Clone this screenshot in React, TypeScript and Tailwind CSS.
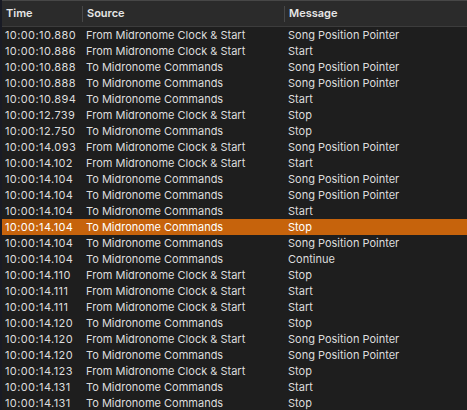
import React from "react";

const rows: [string, string, string][] = [
  ["10:00:10.880", "From Midronome Clock & Start", "Song Position Pointer"],
  ["10:00:10.886", "From Midronome Clock & Start", "Start"],
  ["10:00:10.888", "To Midronome Commands", "Song Position Pointer"],
  ["10:00:10.888", "To Midronome Commands", "Song Position Pointer"],
  ["10:00:10.894", "To Midronome Commands", "Start"],
  ["10:00:12.739", "From Midronome Clock & Start", "Stop"],
  ["10:00:12.750", "To Midronome Commands", "Stop"],
  ["10:00:14.093", "From Midronome Clock & Start", "Song Position Pointer"],
  ["10:00:14.102", "From Midronome Clock & Start", "Start"],
  ["10:00:14.104", "To Midronome Commands", "Song Position Pointer"],
  ["10:00:14.104", "To Midronome Commands", "Song Position Pointer"],
  ["10:00:14.104", "To Midronome Commands", "Start"],
  ["10:00:14.104", "To Midronome Commands", "Stop"],
  ["10:00:14.104", "To Midronome Commands", "Song Position Pointer"],
  ["10:00:14.104", "To Midronome Commands", "Continue"],
  ["10:00:14.110", "From Midronome Clock & Start", "Stop"],
  ["10:00:14.111", "From Midronome Clock & Start", "Start"],
  ["10:00:14.111", "From Midronome Clock & Start", "Start"],
  ["10:00:14.120", "To Midronome Commands", "Stop"],
  ["10:00:14.120", "From Midronome Clock & Start", "Song Position Pointer"],
  ["10:00:14.120", "To Midronome Commands", "Song Position Pointer"],
  ["10:00:14.123", "From Midronome Clock & Start", "Stop"],
  ["10:00:14.131", "To Midronome Commands", "Start"],
  ["10:00:14.131", "To Midronome Commands", "Stop"],
];

export default function App() {
  return (
    <div
      className="flex h-[410px] w-[467px] overflow-hidden bg-[#1e1e1e] text-[11px] text-[#dddddd]"
      style={{ fontFamily: "Inter, 'Liberation Sans', sans-serif" }}
    >
      <div className="w-[2px] shrink-0 bg-[#191b25]" />
      <div className="flex min-w-0 flex-1 flex-col">
        <div className="flex h-[27px] shrink-0 items-center border-t border-b border-t-[#474747] border-b-[#3c3c3c] bg-[#2b2b2b] font-semibold text-[#e6e6e6]">
          <div className="flex h-full w-[80px] items-center pl-[4px]">Time</div>
          <div className="h-[16px] w-px bg-[#484848]" />
          <div className="flex h-full w-[201px] items-center pl-[4px]">Source</div>
          <div className="h-[16px] w-px bg-[#484848]" />
          <div className="flex h-full flex-1 items-center pl-[4px]">Message</div>
        </div>
        {rows.map((r, i) => (
          <div
            key={i}
            className={
              i === 12
                ? "flex h-[16px] shrink-0 items-center bg-[#c6630c] pt-px text-white"
                : "flex h-[16px] shrink-0 items-center pt-px"
            }
          >
            <div className="w-[81px] shrink-0 pl-[3px] tracking-[0.4px] whitespace-nowrap">{r[0]}</div>
            <div className="w-[202px] shrink-0 pl-[3px] whitespace-nowrap">{r[1]}</div>
            <div className="flex-1 pl-[3px] whitespace-nowrap">{r[2]}</div>
          </div>
        ))}
      </div>
    </div>
  );
}
